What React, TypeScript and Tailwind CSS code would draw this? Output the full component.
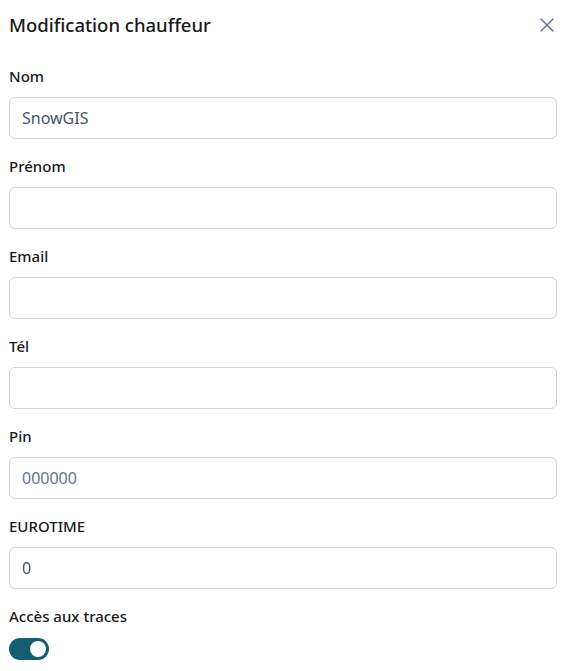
import { useState } from "react";
import { X } from "lucide-react";

const fields = [
  { label: "Nom", value: "SnowGIS", placeholder: "" },
  { label: "Prénom", value: "", placeholder: "" },
  { label: "Email", value: "", placeholder: "" },
  { label: "Tél", value: "", placeholder: "" },
  { label: "Pin", value: "", placeholder: "000000" },
  { label: "EUROTIME", value: "0", placeholder: "" },
];

export default function App() {
  const [values, setValues] = useState(fields.map((f) => f.value));
  const [traces, setTraces] = useState(true);

  return (
    <div
      className="bg-white min-h-[671px] pl-[9px] pr-[8px] pt-[11px] text-[#1a1a1a]"
      style={{ fontFamily: '"Noto Sans", "DejaVu Sans", sans-serif' }}
    >
      <div className="flex items-center justify-between h-7">
        <h1 className="text-[18.5px] font-medium leading-7">Modification chauffeur</h1>
        <button className="text-slate-500 -mr-[2px]">
          <X size={24} strokeWidth={1.5} />
        </button>
      </div>

      <form className="mt-[25px] flex flex-col gap-[15px]">
        {fields.map((f, i) => (
          <div key={f.label}>
            <label className="block text-[15px] font-medium leading-6 mb-[9px]">
              {f.label}
            </label>
            <input
              type="text"
              value={values[i]}
              placeholder={f.placeholder}
              onChange={(e) => {
                const next = [...values];
                next[i] = e.target.value;
                setValues(next);
              }}
              className="w-full h-[42px] px-3 border border-slate-300 rounded-md text-base text-slate-600 placeholder:text-slate-500 focus:outline-none"
            />
          </div>
        ))}

        <div>
          <label className="block text-[15px] font-medium leading-6 mb-[10px]">
            Accès aux traces
          </label>
          <button
            type="button"
            onClick={() => setTraces(!traces)}
            className={`relative w-10 h-[22px] rounded-full ${traces ? "bg-[#155e70]" : "bg-slate-300"}`}
          >
            <span
              className={`absolute top-[3px] w-4 h-4 rounded-full bg-white ${traces ? "left-[21px]" : "left-[3px]"}`}
            />
          </button>
        </div>
      </form>
    </div>
  );
}
